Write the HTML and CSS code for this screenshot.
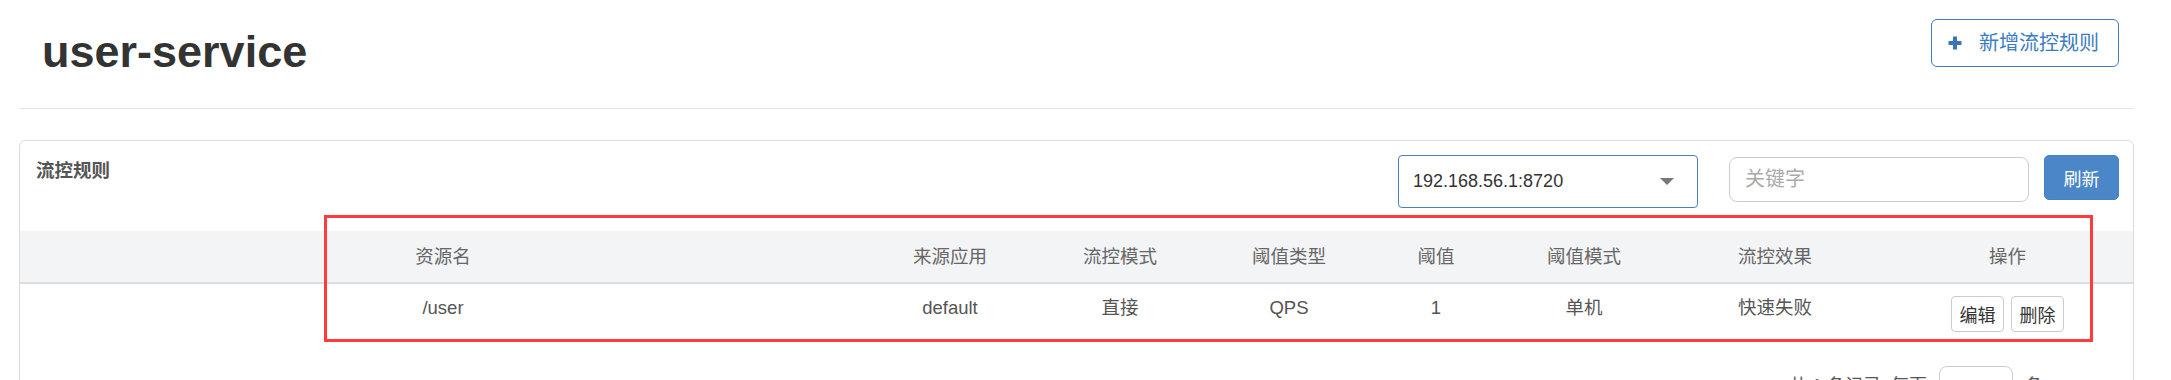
FILE: index.html
```html
<!DOCTYPE html>
<html lang="zh-CN">
<head>
    <meta charset="UTF-8">
    <title>user-service 流控规则</title>
    <link rel="stylesheet" href="styles.css">
</head>
<body>
    <div class="page">
        <div class="page-header">
            <h1>user-service</h1>
            <button class="add-button">
                <svg width="14" height="14" viewBox="0 0 14 14"><path d="M7 0.5V13.5M0.5 7H13.5" stroke="#3a75b8" stroke-width="4"/></svg>
                <span>新增流控规则</span>
            </button>
        </div>

        <div class="panel">
            <div class="panel-heading">
                <span class="panel-title">流控规则</span>
                <div class="host-select">
                    <span>192.168.56.1:8720</span>
                    <span class="caret"></span>
                </div>
                <input class="keyword" type="text" placeholder="关键字">
                <button class="refresh">刷新</button>
            </div>

            <table class="rules">
                <colgroup>
                    <col style="width: 846px">
                    <col style="width: 168px">
                    <col style="width: 172px">
                    <col style="width: 166px">
                    <col style="width: 128px">
                    <col style="width: 168px">
                    <col style="width: 214px">
                    <col style="width: 251px">
                </colgroup>
                <thead>
                    <tr>
                        <th>资源名</th>
                        <th>来源应用</th>
                        <th>流控模式</th>
                        <th>阈值类型</th>
                        <th>阈值</th>
                        <th>阈值模式</th>
                        <th>流控效果</th>
                        <th>操作</th>
                    </tr>
                </thead>
                <tbody>
                    <tr>
                        <td>/user</td>
                        <td>default</td>
                        <td>直接</td>
                        <td>QPS</td>
                        <td>1</td>
                        <td>单机</td>
                        <td>快速失败</td>
                        <td>
                            <div class="actions">
                                <button class="small-btn">编辑</button>
                                <button class="small-btn">删除</button>
                            </div>
                        </td>
                    </tr>
                </tbody>
            </table>

            <div class="pager">
                <span>共 1 条记录, 每页</span>
                <input class="page-size" type="text" value="">
                <span>条</span>
            </div>
        </div>
    </div>

    <div class="highlight"></div>
</body>
</html>
```

FILE: styles.css
```css
* {
    margin: 0;
    padding: 0;
    box-sizing: border-box;
}

body {
    font-family: "Liberation Sans", "Noto Sans CJK SC", sans-serif;
    background-color: #fff;
    color: #555;
    overflow: hidden;
}

.page {
    margin: 0 37px 0 19px;
}

.page-header {
    display: flex;
    justify-content: space-between;
    align-items: flex-start;
    height: 109px;
    padding: 19px 15px 0 23px;
    border-bottom: 1px solid #e5e5e5;
}

.page-header h1 {
    margin-top: 10px;
    font-size: 45px;
    line-height: 45px;
    font-weight: bold;
    color: #333;
}

.add-button {
    display: flex;
    align-items: center;
    gap: 17px;
    height: 48px;
    padding: 0 19px 0 16px;
    background-color: #fff;
    border: 1px solid #3f7bbf;
    border-radius: 6px;
    font-family: inherit;
    font-size: 20px;
    line-height: 24px;
    color: #3a7cc2;
}

.panel {
    margin-top: 31px;
    border: 1px solid #ddd;
    border-radius: 6px;
    height: 300px;
}

.panel-heading {
    display: flex;
    align-items: flex-start;
    padding: 14px 14px 23px 16px;
}

.panel-title {
    margin-top: 4px;
    margin-right: auto;
    font-size: 18.5px;
    line-height: 24px;
    font-weight: bold;
    color: #555;
}

.host-select {
    display: flex;
    align-items: center;
    justify-content: space-between;
    width: 300px;
    height: 53px;
    margin-right: 31px;
    padding: 0 23px 0 14px;
    border: 1px solid #4a80c0;
    border-radius: 4px;
    font-size: 18px;
    color: #333;
}

.caret {
    width: 0;
    height: 0;
    border-left: 7.5px solid transparent;
    border-right: 7.5px solid transparent;
    border-top: 7px solid #777;
}

.keyword {
    width: 300px;
    height: 45px;
    margin-top: 2px;
    margin-right: 15px;
    padding: 0 15px;
    border: 1px solid #ccc;
    border-radius: 8px;
    font-family: inherit;
    font-size: 20px;
    outline: none;
}

.keyword::placeholder {
    color: #aaa;
}

.refresh {
    width: 75px;
    height: 45px;
    border: 1px solid #4581c2;
    border-radius: 5px;
    background-color: #4a86c8;
    color: #fff;
    font-family: inherit;
    font-size: 18px;
}

.rules {
    width: 100%;
    table-layout: fixed;
    border-collapse: collapse;
    font-size: 18.5px;
}

.rules th {
    height: 52px;
    background-color: #f3f4f6;
    border-bottom: 2px solid #ddd;
    font-weight: normal;
    color: #666;
    line-height: 24px;
    text-align: center;
    vertical-align: middle;
}

.rules td {
    padding: 12px 8px;
    line-height: 24px;
    text-align: center;
    vertical-align: top;
    color: #555;
}

.actions {
    display: flex;
    justify-content: center;
    gap: 7px;
}

.small-btn {
    width: 53px;
    height: 36px;
    background-color: #fff;
    border: 1px solid #ccc;
    border-radius: 4px;
    font-family: inherit;
    font-size: 18px;
    color: #333;
}

.pager {
    display: flex;
    justify-content: flex-end;
    align-items: center;
    gap: 12px;
    padding: 22px 90px 0 0;
    font-size: 18px;
    color: #555;
}

.page-size {
    width: 74px;
    height: 36px;
    border: 1px solid #ccc;
    border-radius: 8px;
}

.highlight {
    position: absolute;
    left: 324px;
    top: 215px;
    width: 1769px;
    height: 127px;
    border: 3px solid #ff3b3b;
    pointer-events: none;
}
```
